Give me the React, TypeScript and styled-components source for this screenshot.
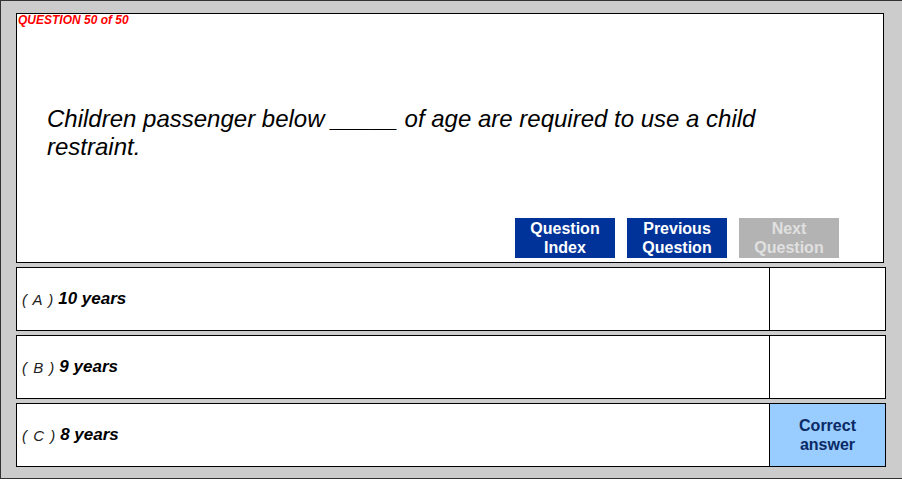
import React from 'react';
import styled, { createGlobalStyle } from 'styled-components';

const GlobalStyle = createGlobalStyle`
  html, body {
    margin: 0;
    padding: 0;
    background: #cccccc;
  }
  * {
    box-sizing: border-box;
  }
`;

const Frame = styled.div`
  width: 902px;
  height: 479px;
  background: #cccccc;
  border-top: 1px solid #333333;
  border-left: 1px solid #333333;
  border-bottom: 1px solid #333333;
  padding: 12px 0 0 15px;
  font-family: "Liberation Sans", Arial, sans-serif;
  display: flex;
  flex-direction: column;
  gap: 4px;
`;

const QuestionPanel = styled.div`
  width: 868px;
  height: 250px;
  background: #ffffff;
  border: 1px solid #000000;
  display: flex;
  flex-direction: column;
`;

const Counter = styled.div`
  color: #ff0000;
  font-size: 12px;
  font-weight: bold;
  font-style: italic;
  line-height: 13px;
  padding: 0 0 0 1px;
`;

const QuestionText = styled.p`
  margin: 78px 0 0 30px;
  max-width: 725px;
  font-size: 24px;
  font-style: italic;
  line-height: 28px;
  color: #000000;
`;

const NavRow = styled.div`
  margin-top: auto;
  display: flex;
  justify-content: flex-end;
  gap: 12px;
  padding: 0 44px 4px 0;
`;

const NavButton = styled.button<{ $disabled?: boolean }>`
  width: 100px;
  height: 40px;
  border: none;
  padding: 0;
  background: ${(p) => (p.$disabled ? '#b3b3b3' : '#003399')};
  color: ${(p) => (p.$disabled ? '#e0e0e0' : '#ffffff')};
  font-family: "Liberation Sans", Arial, sans-serif;
  font-size: 16px;
  font-weight: bold;
  line-height: 19px;
  text-align: center;
  cursor: ${(p) => (p.$disabled ? 'default' : 'pointer')};
`;

const OptionList = styled.div`
  display: flex;
  flex-direction: column;
  gap: 4px;
`;

const OptionRow = styled.div`
  width: 870px;
  height: 64px;
  background: #ffffff;
  border: 1px solid #000000;
  display: flex;
`;

const OptionLabel = styled.div`
  flex: 1;
  display: flex;
  align-items: center;
  padding-left: 5px;
  font-style: italic;
  font-size: 17px;
`;

const Letter = styled.span`
  font-size: 15px;
  font-weight: normal;
  color: #222222;
  margin-right: 4px;
  letter-spacing: 1px;
`;

const Answer = styled.span`
  font-weight: bold;
  color: #000000;
`;

const ResultCell = styled.div<{ $correct?: boolean }>`
  width: 116px;
  border-left: 1px solid #000000;
  background: ${(p) => (p.$correct ? '#99ccff' : '#ffffff')};
  color: #0a2a66;
  font-size: 16px;
  font-weight: bold;
  line-height: 19px;
  display: flex;
  align-items: center;
  justify-content: center;
  text-align: center;
`;

const options = [
  { letter: 'A', text: '10 years', correct: false },
  { letter: 'B', text: '9 years', correct: false },
  { letter: 'C', text: '8 years', correct: true },
];

const App: React.FC = () => {
  return (
    <>
      <GlobalStyle />
      <Frame>
        <QuestionPanel>
          <Counter>QUESTION 50 of 50</Counter>
          <QuestionText>
            Children passenger below _____ of age are required to use a child restraint.
          </QuestionText>
          <NavRow>
            <NavButton>Question<br />Index</NavButton>
            <NavButton>Previous<br />Question</NavButton>
            <NavButton $disabled>Next<br />Question</NavButton>
          </NavRow>
        </QuestionPanel>
        <OptionList>
          {options.map((o) => (
            <OptionRow key={o.letter}>
              <OptionLabel>
                <Letter>( {o.letter} )</Letter>
                <Answer>{o.text}</Answer>
              </OptionLabel>
              <ResultCell $correct={o.correct}>
                {o.correct ? <span>Correct<br />answer</span> : null}
              </ResultCell>
            </OptionRow>
          ))}
        </OptionList>
      </Frame>
    </>
  );
};

export default App;
